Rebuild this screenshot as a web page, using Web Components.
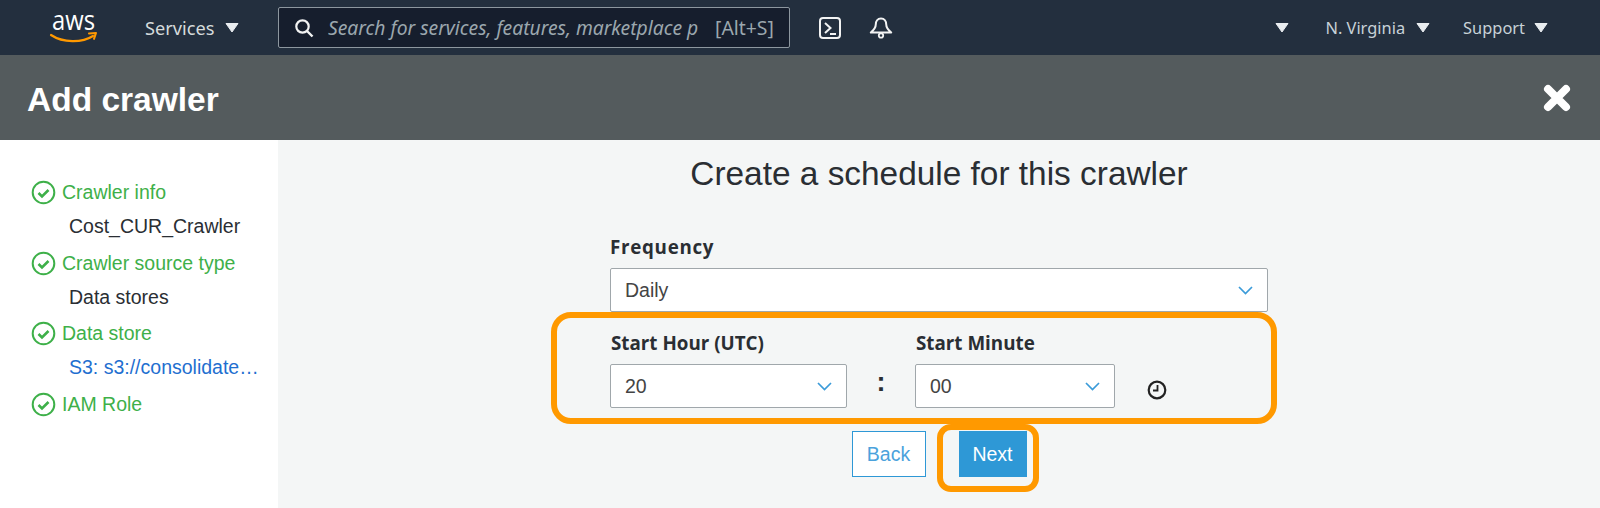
<!DOCTYPE html>
<html>
<head>
<meta charset="utf-8">
<title>Add crawler</title>
<style>
  html, body { margin: 0; padding: 0; height: 100%; background: #f4f6f6; }
  body { display: flex; flex-direction: column; height: 508px; overflow: hidden; font-family: "Liberation Sans", Arial, sans-serif; }
</style>
</head>
<body>
<aws-topbar></aws-topbar>
<wizard-header>Add crawler</wizard-header>
<wizard-body>
  <wizard-steps slot="side">
    <step-item>Crawler info</step-item>
    <step-detail>Cost_CUR_Crawler</step-detail>
    <step-item>Crawler source type</step-item>
    <step-detail>Data stores</step-detail>
    <step-item>Data store</step-item>
    <step-detail link>S3: s3://consolidate…</step-detail>
    <step-item>IAM Role</step-item>
  </wizard-steps>
  <schedule-form></schedule-form>
</wizard-body>

<script>
const caret = `<svg width="14" height="11" viewBox="0 0 14 11"><path d="M1 1.500h12L7 10z" fill="#e9edf0" stroke="#e9edf0" stroke-linejoin="round"/></svg>`;

class AwsTopbar extends HTMLElement {
  constructor() {
    super();
    this.attachShadow({ mode: 'open' });
    this.shadowRoot.innerHTML = `
      <style>
        :host { display: flex; align-items: center; flex: none; height: 55px; background: #232f3e; color: #d5dbdb;
          font: 16px "Noto Sans", "Open Sans", sans-serif; box-sizing: border-box; }
        .logo { margin-left: 50px; width: 48px; height: 32px; flex: none; overflow: visible; }
        .item { display: flex; align-items: center; flex: none; }
        .services { margin-left: 47px; gap: 11px; font-size: 18.200px; width: 133px; }
        .search { display: flex; align-items: center; flex: none; box-sizing: border-box; width: 512px; height: 41px;
          background: #161e2d; border: 1px solid #8d979f; border-radius: 2px; }
        .search svg { margin-left: 15px; flex: none; }
        .search .ph { margin-left: 14px; width: 373px; overflow: hidden; white-space: nowrap; font-style: italic; color: #9ba7ae; font-size: 19.300px; }
        .search .key { margin-left: 14px; color: #9ba7ae; font-size: 19.400px; white-space: nowrap; }
        .term { margin-left: 28px; flex: none; }
        .bell { margin-left: 27px; flex: none; }
        .right { margin-left: auto; display: flex; align-items: center; padding-right: 52px; font-size: 16.400px; color: #c8d2d8; }
        .right .a { margin-right: 36px; }
        .right .b { margin-right: 33px; gap: 11px; }
        .right .c { gap: 9px; }
      </style>
      <svg class="logo" viewBox="0 0 48 32">
        <text x="2" y="18" font-family="Open Sans, sans-serif" font-size="27" fill="#fff" textLength="43" lengthAdjust="spacingAndGlyphs">aws</text>
        <path d="M1 23c12 8 31 8 42 1" fill="none" stroke="#f90" stroke-width="2.200" stroke-linecap="round"/>
        <path d="M39 21.500l7-.6-2 6" fill="none" stroke="#f90" stroke-width="2" stroke-linecap="round" stroke-linejoin="round"/>
      </svg>
      <div class="item services"><span>Services</span>${caret}</div>
      <div class="search">
        <svg width="20" height="20" viewBox="0 0 20 20"><circle cx="8.500" cy="8.500" r="6.200" fill="none" stroke="#f2f3f3" stroke-width="2.200"/><path d="M13 13l5.500 5.500" stroke="#f2f3f3" stroke-width="2.400"/></svg>
        <span class="ph">Search for services, features, marketplace p</span>
        <span class="key">[Alt+S]</span>
      </div>
      <svg class="term" width="24" height="24" viewBox="0 0 24 24"><rect x="2" y="2" width="20" height="20" rx="3" fill="none" stroke="#f2f3f3" stroke-width="2"/><path d="M7 7l5.500 5L7 17M12 18h6" fill="none" stroke="#f2f3f3" stroke-width="2"/></svg>
      <svg class="bell" width="24" height="24" viewBox="0 0 24 24"><path d="M12 2.500c-3.600 0-5.200 3-5.200 5.700 0 3.500-2 5.800-5 8.300h20.400c-3-2.500-5-4.800-5-8.300 0-2.700-1.600-5.700-5.200-5.700z" fill="none" stroke="#f2f3f3" stroke-width="2" stroke-linejoin="round"/><circle cx="12" cy="19.500" r="2.200" fill="none" stroke="#f2f3f3" stroke-width="1.800"/></svg>
      <div class="right">
        <div class="item a">${caret}</div>
        <div class="item b"><span>N. Virginia</span>${caret}</div>
        <div class="item c"><span>Support</span>${caret}</div>
      </div>
    `;
  }
}
customElements.define('aws-topbar', AwsTopbar);

class WizardHeader extends HTMLElement {
  constructor() {
    super();
    this.attachShadow({ mode: 'open' });
    this.shadowRoot.innerHTML = `
      <style>
        :host { display: flex; align-items: center; justify-content: space-between; flex: none; height: 85px; box-sizing: border-box;
          background: #545b5d; color: #fff; padding: 0 29px 0 27px; font: bold 33.500px "Liberation Sans", Arial, sans-serif; }
        .title { padding-top: 4px; }
        svg { display: block; }
      </style>
      <div class="title"><slot></slot></div>
      <svg width="28" height="28" viewBox="0 0 28 28"><path d="M5 5l18 18M23 5L5 23" stroke="#fff" stroke-width="8" stroke-linecap="round"/></svg>
    `;
  }
}
customElements.define('wizard-header', WizardHeader);

class WizardBody extends HTMLElement {
  constructor() {
    super();
    this.attachShadow({ mode: 'open' });
    this.shadowRoot.innerHTML = `
      <style>
        :host { display: flex; flex: 1; min-height: 0; }
        .side { display: block; flex: none; width: 278px; background: #fff; }
        .main { flex: 1; min-width: 0; background: #f4f6f6; }
      </style>
      <div class="side"><slot name="side"></slot></div>
      <div class="main"><slot></slot></div>
    `;
  }
}
customElements.define('wizard-body', WizardBody);

class WizardSteps extends HTMLElement {
  constructor() {
    super();
    this.attachShadow({ mode: 'open' });
    this.shadowRoot.innerHTML = `
      <style>
        :host { display: flex; flex-direction: column; padding: 35px 0 0 31px; font: 19.500px "Liberation Sans", Arial, sans-serif; }
      </style>
      <slot></slot>
    `;
  }
}
customElements.define('wizard-steps', WizardSteps);

class StepItem extends HTMLElement {
  constructor() {
    super();
    this.attachShadow({ mode: 'open' });
    this.shadowRoot.innerHTML = `
      <style>
        :host { display: flex; align-items: center; gap: 6px; height: 35.300px; color: #3eb049; white-space: nowrap; }
        svg { flex: none; }
      </style>
      <svg width="25" height="25" viewBox="0 0 25 25"><circle cx="12.500" cy="12.500" r="10.800" fill="none" stroke="#3eb049" stroke-width="2"/><path d="M7.500 13l3.500 3.500 6.500-6.500" fill="none" stroke="#3eb049" stroke-width="2.600"/></svg>
      <slot></slot>
    `;
  }
}
customElements.define('step-item', StepItem);

class StepDetail extends HTMLElement {
  constructor() {
    super();
    this.attachShadow({ mode: 'open' });
    this.shadowRoot.innerHTML = `
      <style>
        :host { display: block; height: 35.300px; line-height: 33.300px; margin-left: 38px; color: #2a2e33; white-space: nowrap; }
        :host([link]) { color: #1f6fd0; }
      </style>
      <slot></slot>
    `;
  }
}
customElements.define('step-detail', StepDetail);

class SelectBox extends HTMLElement {
  constructor() {
    super();
    this.attachShadow({ mode: 'open' });
    this.shadowRoot.innerHTML = `
      <style>
        :host { display: flex; align-items: center; justify-content: space-between; box-sizing: border-box; height: 44px;
          background: #fff; border: 1px solid #a0a7ab; border-radius: 2px; padding: 0 14px;
          font: 19.500px "Liberation Sans", Arial, sans-serif; color: #444; }
      </style>
      <slot></slot>
      <svg width="15" height="9" viewBox="0 0 15 9"><path d="M1 1l6.500 6.500L14 1" fill="none" stroke="#3b9bd9" stroke-width="1.700"/></svg>
    `;
  }
}
customElements.define('select-box', SelectBox);

class ScheduleForm extends HTMLElement {
  constructor() {
    super();
    this.attachShadow({ mode: 'open' });
    this.shadowRoot.innerHTML = `
      <style>
        :host { display: flex; flex-direction: column; align-items: center; font-family: "Liberation Sans", Arial, sans-serif; color: #2a2e33; }
        h2 { margin: 11px 0 0; font-size: 33.400px; font-weight: 400; line-height: 46px; }
        .form { width: 658px; position: relative; margin-top: 38px; }
        label { display: block; font: 700 18.800px/24px "Open Sans", "Noto Sans", sans-serif; color: #2a2e33; white-space: nowrap; }
        .freq-label { letter-spacing: .7px; }
        .freq { margin-top: 9px; }
        .time { display: grid; grid-template-columns: 237px 68px 200px auto; margin-top: 19px; }
        .time label { margin: 0 0 9px 1px; }
        .l1 { grid-area: 1 / 1; }
        .l2 { grid-area: 1 / 3; }
        .s1 { grid-area: 2 / 1; }
        .s2 { grid-area: 2 / 3; }
        .colon { grid-area: 2 / 2; text-align: center; font: bold 27px/36px "Liberation Sans", sans-serif; }
        .clock { grid-area: 2 / 4; margin: 16px 0 0 32px; }
        .actions { display: flex; justify-content: center; gap: 33px; margin-top: 23px; }
        button { box-sizing: border-box; height: 46px; font: 19.500px "Liberation Sans", Arial, sans-serif; border: 1px solid #2e98d6; padding: 0; }
        .back { width: 74px; background: #fff; color: #4ba2dc; }
        .next { width: 68px; background: #2e98d6; color: #fff; }
        .mark { position: absolute; box-sizing: border-box; border: 6px solid #f90; pointer-events: none; }
        .mark-time { left: -59px; top: 77px; width: 726px; height: 112px; border-radius: 20px; }
        .mark-next { left: 327px; top: 189px; width: 102px; height: 68px; border-radius: 14px; }
      </style>
      <h2>Create a schedule for this crawler</h2>
      <div class="form">
        <label class="freq-label">Frequency</label>
        <select-box class="freq">Daily</select-box>
        <div class="time">
          <label class="l1">Start Hour (UTC)</label>
          <label class="l2">Start Minute</label>
          <select-box class="s1">20</select-box>
          <div class="colon">:</div>
          <select-box class="s2">00</select-box>
          <svg class="clock" width="20" height="20" viewBox="0 0 20 20"><circle cx="10" cy="10" r="8.300" fill="none" stroke="#222" stroke-width="2.200"/><path d="M10.500 5v5.500H6" fill="none" stroke="#222" stroke-width="1.800"/></svg>
        </div>
        <div class="actions">
          <button class="back">Back</button>
          <button class="next">Next</button>
        </div>
        <div class="mark mark-time"></div>
        <div class="mark mark-next"></div>
      </div>
    `;
  }
}
customElements.define('schedule-form', ScheduleForm);
</script>
</body>
</html>
